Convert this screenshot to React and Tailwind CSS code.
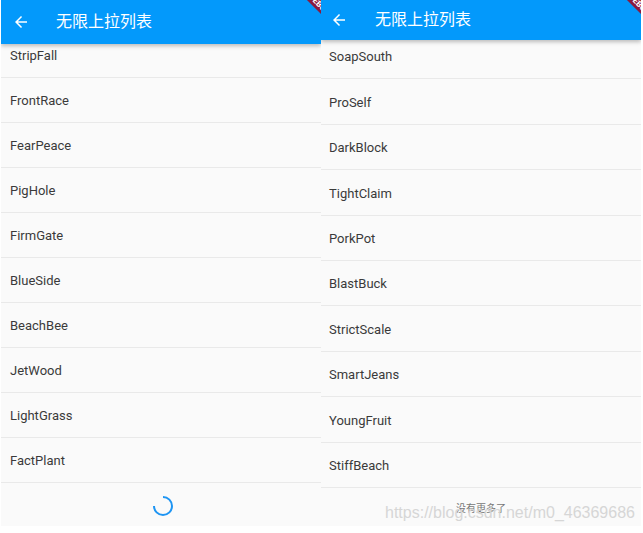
import React from "react";

const leftItems = ["FrontRace","FearPeace","PigHole","FirmGate","BlueSide","BeachBee","JetWood","LightGrass","FactPlant"];
const rightItems = ["ProSelf","DarkBlock","TightClaim","PorkPot","BlastBuck","StrictScale","SmartJeans","YoungFruit","StiffBeach"];

function Arrow() {
  return (
    <svg width="18" height="18" viewBox="0 0 24 24" fill="white">
      <path d="M20 11H7.83l5.59-5.59L12 4l-8 8 8 8 1.41-1.41L7.83 13H20v-2z" />
    </svg>
  );
}

function Banner() {
  return (
    <div className="absolute top-0 right-0 w-[40px] h-[40px] overflow-hidden pointer-events-none">
      <div className="absolute top-[0px] right-[-28px] w-[60px] h-[10px] bg-[#8b1a3c] rotate-45 flex items-center justify-center text-[8px] font-bold text-white leading-none" style={{ fontFamily: "Roboto, sans-serif" }}>
        DEBUG
      </div>
    </div>
  );
}

export default function App() {
  return (
    <div className="w-[643px] h-[533px] bg-white flex" style={{ fontFamily: "Roboto, 'Noto Sans CJK SC', sans-serif" }}>
      <div className="ml-[1px] w-[320px] h-[526px] bg-[#fafafa] flex flex-col relative overflow-hidden">
        <div className="h-[44px] bg-[#0399fb] flex items-center shrink-0 shadow-[0_2px_4px_rgba(0,0,0,0.25)] z-10 relative">
          <div className="w-[40px] flex justify-center"><Arrow /></div>
          <div className="ml-[15px] text-white text-[16px]">无限上拉列表</div>
          <Banner />
        </div>
        <div className="h-[45px] -mt-[11px] shrink-0 flex items-center pt-[1px] pl-[9px] border-b border-[#e9e9e9] text-[13px] text-[#3a3a3a]">StripFall</div>
        {leftItems.map((t) => (
          <div key={t} className="h-[45px] shrink-0 flex items-center pt-[2px] pl-[9px] border-b border-[#e9e9e9] text-[13px] text-[#3a3a3a]">{t}</div>
        ))}
        <div className="flex-1 flex items-center justify-center pl-[4px] pt-[2px]">
          <svg width="22" height="22" viewBox="0 0 22 22">
            <path d="M11 2 A9 9 0 1 1 2 11" fill="none" stroke="#1e95f3" strokeWidth="2" />
          </svg>
        </div>
      </div>
      <div className="w-[320px] h-[526px] bg-[#fafafa] flex flex-col relative overflow-hidden">
        <div className="h-[40px] bg-[#0399fb] flex items-center shrink-0 shadow-[0_2px_4px_rgba(0,0,0,0.25)] z-10 relative">
          <div className="w-[36px] flex justify-center"><Arrow /></div>
          <div className="ml-[18px] text-white text-[16px]">无限上拉列表</div>
          <Banner />
        </div>
        <div className="h-[45.4px] -mt-[6px] shrink-0 flex items-center pt-[1px] pl-[8px] border-b border-[#e9e9e9] text-[13px] text-[#3a3a3a]">SoapSouth</div>
        {rightItems.map((t) => (
          <div key={t} className="h-[45.4px] shrink-0 flex items-center pt-[2px] pl-[8px] border-b border-[#e9e9e9] text-[13px] text-[#3a3a3a]">{t}</div>
        ))}
        <div className="flex-1 flex items-center justify-center relative">
          <div className="text-[10px] text-[#777] mt-[4px]">没有更多了</div>
          <div className="absolute left-[64px] top-[13px] text-[16px] text-[#d6d6d6] whitespace-nowrap" style={{ fontFamily: "Arial, 'Liberation Sans', sans-serif" }}>https://blog.csdn.net/m0_46369686</div>
        </div>
      </div>
    </div>
  );
}
